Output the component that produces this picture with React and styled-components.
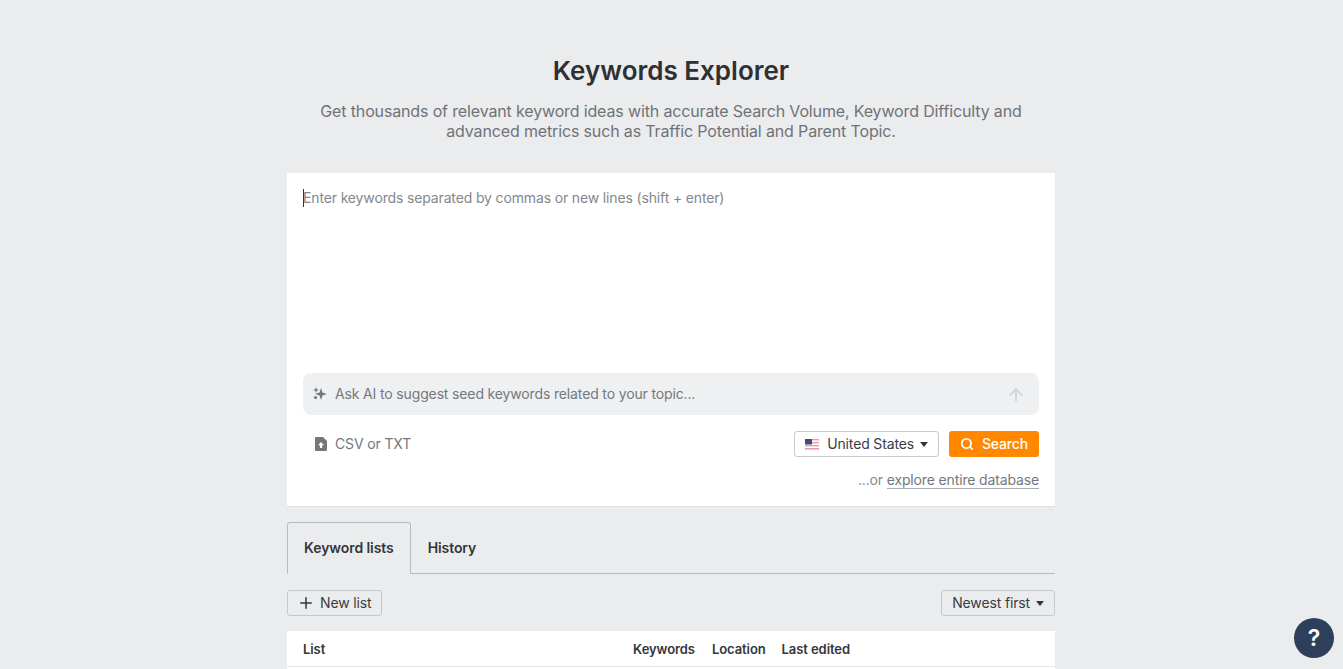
import styled, { createGlobalStyle } from "styled-components";
import { Search, Plus, ArrowUp } from "lucide-react";

const GlobalStyle = createGlobalStyle`
  html, body {
    margin: 0;
    padding: 0;
    height: 100%;
    overflow: hidden;
    background: #ebecee;
    font-family: Inter, "Liberation Sans", sans-serif;
    color: #33363b;
  }
  * { box-sizing: border-box; }
`;

const Page = styled.div`
  height: 100vh;
  overflow: hidden;
  display: flex;
  flex-direction: column;
  align-items: center;
  padding: 54px 1px 0 0;
  letter-spacing: -0.145px;
`;

const Column = styled.div`
  width: 768px;
  display: flex;
  flex-direction: column;
`;

const Heading = styled.h1`
  margin: 0;
  font-size: 26px;
  line-height: 34px;
  font-weight: 600;
  letter-spacing: 0;
  text-align: center;
  color: #2f3033;
`;

const Subtitle = styled.p`
  margin: 13px auto 32px;
  width: 720px;
  font-size: 16px;
  line-height: 20px;
  text-align: center;
  color: #6f7378;
`;

const Card = styled.div`
  height: 334px;
  background: #fff;
  border-bottom: 1px solid #dfe1e4;
  padding: 16px;
  display: flex;
  flex-direction: column;
`;

const InputArea = styled.div`
  height: 184px;
  font-size: 14px;
  line-height: 18px;
  color: #83878d;
`;

const Placeholder = styled.span`
  position: relative;
  display: inline-block;
  &::before {
    content: "";
    position: absolute;
    left: 0;
    top: 0;
    width: 1px;
    height: 18px;
    background: #33363b;
  }
`;

const AskBar = styled.div`
  height: 42px;
  flex: none;
  border-radius: 8px;
  background: #eff0f2;
  display: flex;
  align-items: center;
  padding: 0 13px 0 9px;
  gap: 7px;
  font-size: 14px;
  color: #74787e;
`;

// text sits a pixel above the centre line of its row
const Label = styled.span`
  margin-bottom: 2px;
  flex: ${(p) => (p.$grow ? 1 : "none")};
`;

const SendIcon = styled(ArrowUp)`
  margin-top: 2px;
`;

const Controls = styled.div`
  margin-top: 16px;
  height: 26px;
  display: flex;
  align-items: center;
  gap: 10px;
`;

const Upload = styled.div`
  flex: 1;
  display: flex;
  align-items: center;
  gap: 8px;
  padding-left: 12px;
  font-size: 14px;
  color: #74787e;
`;

const SelectButton = styled.button`
  height: 26px;
  padding: 0 10px 0 ${(p) => p.$left || 10}px;
  display: flex;
  align-items: center;
  gap: ${(p) => p.$gap || 6}px;
  background: ${(p) => p.$bg || "transparent"};
  border: 1px solid #c6c8cc;
  border-radius: 3px;
  font: inherit;
  font-size: 14px;
  letter-spacing: inherit;
  color: #3a3d44;
`;

const Caret = styled.span`
  width: 0;
  height: 0;
  border-left: 4px solid transparent;
  border-right: 4px solid transparent;
  border-top: 5px solid #33363b;
`;

const SearchButton = styled.button`
  height: 26px;
  width: 90px;
  display: flex;
  align-items: center;
  justify-content: center;
  gap: 8px;
  background: #ff8800;
  border: none;
  border-radius: 3px;
  font: inherit;
  font-size: 14px;
  font-weight: 500;
  letter-spacing: inherit;
  color: #fff;
`;

const DatabaseLine = styled.div`
  margin-top: 14px;
  text-align: right;
  font-size: 14px;
  line-height: 18px;
  color: #83878d;
`;

const DatabaseLink = styled.a`
  color: #74787e;
  text-decoration: none;
  border-bottom: 1px solid #a9acb1;
`;

const Tabs = styled.div`
  margin-top: 15px;
  height: 52px;
  display: flex;
  border-bottom: 1px solid #b9bbbf;
`;

const Tab = styled.div`
  height: ${(p) => (p.$active ? "52px" : "51px")};
  padding: 0 16px 2px;
  display: flex;
  align-items: center;
  font-size: 14px;
  font-weight: 600;
  letter-spacing: -0.08px;
  color: #33363b;
  border: 1px solid ${(p) => (p.$active ? "#b9bbbf" : "transparent")};
  border-bottom: ${(p) => (p.$active ? "1px solid #ebecee" : "none")};
  border-radius: 3px 3px 0 0;
`;

const ListBar = styled.div`
  margin-top: 16px;
  display: flex;
  justify-content: space-between;
`;

const TableHead = styled.div`
  margin-top: 15px;
  height: 36px;
  flex: none;
  background: #fff;
  border-bottom: 1px solid #e6e7e9;
  display: flex;
  align-items: center;
  gap: 16px;
  padding: 0 205px 0 16px;
  font-size: 13px;
  font-weight: 600;
  letter-spacing: -0.08px;
  color: #33363b;
`;

const ListCol = styled.span`
  flex: 1;
`;

const KeywordsCol = styled.span`
  margin-right: 1px;
`;

const TableRest = styled.div`
  height: 40px;
  background: #fff;
`;

const HelpButton = styled.button`
  position: fixed;
  right: 9px;
  bottom: 11px;
  width: 40px;
  height: 40px;
  border: none;
  border-radius: 50%;
  background: #2e3f5c;
  color: #fff;
  font: inherit;
  font-size: 23px;
  font-weight: 600;
  display: flex;
  align-items: center;
  justify-content: center;
`;

const FlagBox = styled.span`
  display: flex;
  margin-right: 2px;
`;

const Sparkle = () => (
  <svg width="16" height="16" viewBox="0 0 16 16" fill="#74787e">
    <path d="M9 2 L10.5 6.5 L15 8 L10.5 9.5 L9 14 L7.5 9.5 L3 8 L7.5 6.5 Z" />
    <path d="M4 1 L4.8 3.2 L7 4 L4.8 4.8 L4 7 L3.2 4.8 L1 4 L3.2 3.2 Z" />
    <circle cx="3.5" cy="11.5" r="1.6" />
  </svg>
);

const FileUp = () => (
  <svg width="12" height="14" viewBox="0 0 12 14">
    <path d="M1 0 H8 L12 4 V13 a1 1 0 0 1 -1 1 H1 a1 1 0 0 1 -1 -1 V1 a1 1 0 0 1 1 -1 Z" fill="#74787e" />
    <path d="M6 5 L9 8.2 H7.1 V11 H4.9 V8.2 H3 Z" fill="#fff" />
  </svg>
);

const UsFlag = () => (
  <svg width="14" height="11" viewBox="0 0 14 11">
    <rect width="14" height="11" fill="#fff" />
    <rect y="0" width="14" height="1.4" fill="#e2a0a6" />
    <rect y="3" width="14" height="1.4" fill="#e2a0a6" />
    <rect y="6" width="14" height="1.4" fill="#e2a0a6" />
    <rect y="9" width="14" height="1.6" fill="#e2a0a6" />
    <rect width="7" height="5.5" fill="#3f4a78" />
  </svg>
);

export default function App() {
  return (
    <Page>
      <GlobalStyle />
      <Column>
        <Heading>Keywords Explorer</Heading>
        <Subtitle>
          Get thousands of relevant keyword ideas with accurate Search Volume, Keyword Difficulty and
          advanced metrics such as Traffic Potential and Parent Topic.
        </Subtitle>
        <Card>
          <InputArea>
            <Placeholder>Enter keywords separated by commas or new lines (shift + enter)</Placeholder>
          </InputArea>
          <AskBar>
            <Sparkle />
            <Label $grow>Ask AI to suggest seed keywords related to your topic...</Label>
            <SendIcon size={20} color="#cfd1d4" strokeWidth={2} />
          </AskBar>
          <Controls>
            <Upload>
              <FileUp />
              <Label>CSV or TXT</Label>
            </Upload>
            <SelectButton $bg="#fff">
              <FlagBox>
                <UsFlag />
              </FlagBox>
              <Label>United States</Label>
              <Caret />
            </SelectButton>
            <SearchButton>
              <Search size={14} strokeWidth={3} />
              <Label>Search</Label>
            </SearchButton>
          </Controls>
          <DatabaseLine>
            ...or <DatabaseLink href="#">explore entire database</DatabaseLink>
          </DatabaseLine>
        </Card>
        <Tabs>
          <Tab $active>Keyword lists</Tab>
          <Tab>History</Tab>
        </Tabs>
        <ListBar>
          <SelectButton $left={9} $gap={5}>
            <Plus size={18} color="#33363b" strokeWidth={2} />
            <Label>New list</Label>
          </SelectButton>
          <SelectButton>
            <Label>Newest first</Label>
            <Caret />
          </SelectButton>
        </ListBar>
        <TableHead>
          <ListCol>List</ListCol>
          <KeywordsCol>Keywords</KeywordsCol>
          <span>Location</span>
          <span>Last edited</span>
        </TableHead>
        <TableRest />
      </Column>
      <HelpButton>?</HelpButton>
    </Page>
  );
}
